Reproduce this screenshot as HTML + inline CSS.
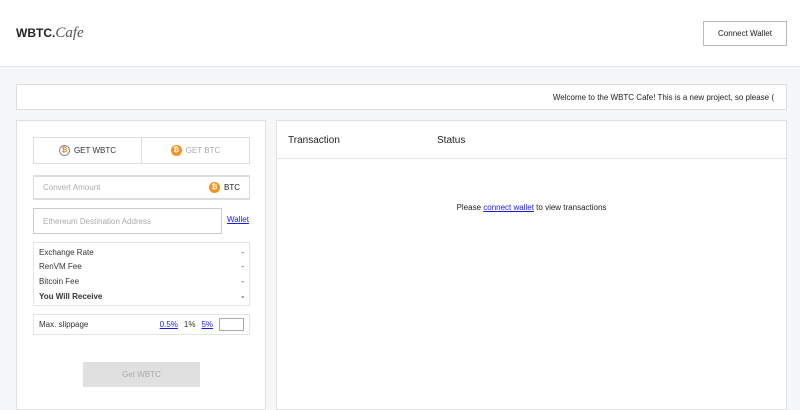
<!DOCTYPE html>
<html><head><style>
*{box-sizing:border-box;margin:0;padding:0}
body{width:800px;height:400px;overflow:hidden;background:#f6f7f9;font-family:"Liberation Sans",sans-serif;font-size:8px;color:#333;position:relative}
.hdr{position:absolute;left:0;top:0;width:800px;height:67px;background:#fff;border-bottom:1px solid #e4e6ea}
.logo{position:absolute;left:16px;top:25px;font-weight:bold;font-size:12px;color:#222}
.logo i{font-family:"Liberation Serif",serif;font-weight:normal;font-size:15px;color:#555}
.cw{position:absolute;left:703px;top:21px;width:84px;height:25px;border:1px solid #bbb;background:#fff;font-size:8px;text-align:center;line-height:23px;color:#222}
.ban{position:absolute;left:16px;top:84px;width:771px;height:26px;background:#fff;border:1px solid #ddd;text-align:right;padding-right:12px;line-height:25px;font-size:8px;color:#222;overflow:hidden;white-space:nowrap}
.lp{position:absolute;left:16px;top:120px;width:250px;height:290px;background:#fff;border:1px solid #e0e0e0}
.rp{position:absolute;left:276px;top:120px;width:511px;height:290px;background:#fff;border:1px solid #e0e0e0}
.tabs{position:absolute;left:16px;top:16px;width:217px;height:27px;border:1px solid #ddd;display:flex}
.tab{flex:1;display:flex;align-items:center;justify-content:center;font-size:8px;gap:4px}
.tab+.tab{border-left:1px solid #ddd;color:#aaa}
.coin{width:11px;height:11px;border-radius:50%;background:#f7931a;color:#fff;font-size:7px;font-weight:bold;text-align:center;line-height:11px}
.coin.g{background:#fff;border:1px solid #888;color:#e08a30;line-height:9px}
.in{position:absolute;border:1px solid #ccc;color:#aaa;font-size:8px;padding-left:9px;display:flex;align-items:center}
.box{position:absolute;left:16px;border:1px solid #e4e4e4;font-size:8px}
.row{display:flex;justify-content:space-between;padding:0 5px;height:14.6px;align-items:center}
a{color:#1a1aee;text-decoration:underline}
.btn{position:absolute;left:66px;top:241px;width:117px;height:25px;background:#e0e0e0;color:#aaa;font-size:8px;text-align:center;line-height:25px}
.th{position:absolute;top:0;left:0;width:509px;height:38px;border-bottom:1px solid #e4e4e4;font-size:10px;color:#222}
</style></head><body>
<div class="hdr"><div class="logo">WBTC.<i>Cafe</i></div><div class="cw">Connect Wallet</div></div>
<div class="ban">Welcome to the WBTC Cafe! This is a new project, so please (</div>
<div class="lp">
 <div class="tabs"><div class="tab"><span class="coin g">₿</span>GET WBTC</div><div class="tab"><span class="coin">₿</span>GET BTC</div></div>
 <div class="in" style="left:16px;top:54px;width:217px;height:25px;border-width:2px 1px;border-color:#ddd">Convert Amount<span style="margin-left:auto;margin-right:9px;display:flex;gap:4px;align-items:center;color:#222"><span class="coin">₿</span>BTC</span></div>
 <div class="in" style="left:16px;top:87px;width:189px;height:26px">Ethereum Destination Address</div>
 <a style="position:absolute;left:210px;top:94px;font-size:8px">Wallet</a>
 <div class="box" style="top:121px;width:217px;height:64px;padding-top:2px">
  <div class="row"><span>Exchange Rate</span><span>-</span></div>
  <div class="row"><span>RenVM Fee</span><span>-</span></div>
  <div class="row"><span>Bitcoin Fee</span><span>-</span></div>
  <div class="row" style="font-weight:bold"><span>You Will Receive</span><span>-</span></div>
 </div>
 <div class="box" style="top:193px;width:217px;height:21px"><div class="row" style="height:19px"><span>Max. slippage</span><span style="display:flex;gap:6px;align-items:center"><a>0.5%</a>1%<a>5%</a><span style="width:25px;height:13px;border:1px solid #aaa;display:inline-block"></span></span></div></div>
 <div class="btn">Get WBTC</div>
</div>
<div class="rp">
 <div class="th"><span style="position:absolute;left:11px;top:14px">Transaction</span><span style="position:absolute;left:160px;top:14px">Status</span></div>
 <div style="position:absolute;top:82px;width:100%;text-align:center;font-size:8px;color:#222">Please <a>connect wallet</a> to view transactions</div>
</div>
</body></html>
